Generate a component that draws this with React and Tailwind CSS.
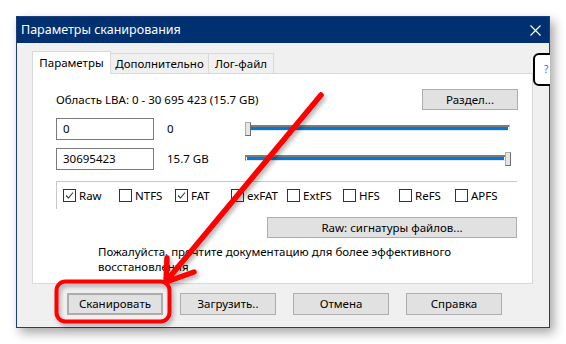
import React from 'react';

const font = { fontFamily: '"Noto Sans", "Open Sans", sans-serif' };

const Check = ({ checked, label }) => (
  <div className="flex items-center w-[56px]">
    <div className="w-[13px] h-[13px] border border-[#333] bg-white flex items-center justify-center shrink-0">
      {checked && (
        <svg width="9" height="9" viewBox="0 0 9 9">
          <path d="M1 4.5 L3.5 7 L8 1.5" fill="none" stroke="#333" strokeWidth="1.1" />
        </svg>
      )}
    </div>
    <span className="ml-[3px] leading-none">{label}</span>
  </div>
);

const Btn = ({ children, className = '' }) => (
  <div className={'h-[21px] bg-[#e1e1e1] border border-[#adadad] flex items-center justify-center ' + className}>
    {children}
  </div>
);

const Slider = ({ right }) => (
  <div className="relative w-[266px] h-[14px]">
    <div
      className={
        'absolute top-[3px] h-[6px] border-t-2 border-t-[#7c7c7c] border-b border-b-[#e6e6e6] border-x border-x-[#e6e6e6] bg-white ' +
        (right ? 'left-0 right-[5px] border-l-[#7c7c7c]' : 'left-[4px] right-[1px]')
      }
    >
      <div className="h-[3px] bg-[#0078d7] mx-[1px]" />
    </div>
    <div
      className={
        'absolute top-0 w-[6px] h-[14px] bg-[#e6e6e6] border border-[#adadad] border-r-[#6d6d6d] border-b-[#6d6d6d] ' +
        (right ? 'right-0' : 'left-0')
      }
    />
  </div>
);

export default function App() {
  return (
    <div className="w-[566px] h-[344px] bg-white relative overflow-hidden text-[11.5px] text-black" style={font}>
      <div className="absolute left-[16px] top-[16px] w-[534px] h-[312px] border border-[#1a3f7a] bg-[#f0f0f0] shadow-[4px_5px_10px_rgba(0,0,0,0.35)] flex flex-col">
        {/* title bar */}
        <div className="h-[26px] bg-[#00306f] text-white flex items-center justify-between pl-[4px] pr-[8px] shrink-0">
          <span className="text-[12.5px]">Параметры сканирования</span>
          <svg width="11" height="11" viewBox="0 0 11 11">
            <path d="M0.5 0.5 L10.5 10.5 M10.5 0.5 L0.5 10.5" stroke="white" strokeWidth="1.2" />
          </svg>
        </div>

        <div className="pl-[15px] pt-[7px]">
          {/* tabs */}
          <div className="flex items-end h-[23px]">
            <div className="h-[23px] w-[79px] bg-white border border-[#d9d9d9] border-b-0 flex items-center justify-center relative z-10 -mb-px">Параметры</div>
            <div className="h-[20px] w-[98px] border border-[#d9d9d9] border-l-0 border-b-0 flex items-center justify-center">Дополнительно</div>
            <div className="h-[20px] w-[65px] border border-[#d9d9d9] border-l-0 border-b-0 flex items-center justify-center">Лог-файл</div>
          </div>

          {/* panel */}
          <div className="w-[501px] h-[211px] bg-white border border-[#d9d9d9] pl-[23px] pt-[15px]">
            <div className="flex items-center justify-between w-[462px]">
              <span>Область LBA: 0 - 30 695 423 (15.7 GB)</span>
              <Btn className="w-[96px]">Раздел...</Btn>
            </div>

            <div className="flex items-center mt-[8px] h-[22px]">
              <div className="w-[98px] h-[22px] border border-[#7a7a7a] flex items-center pl-[6px]">0</div>
              <span className="w-[91px] pl-[13px]">0</span>
              <Slider />
            </div>

            <div className="flex items-center mt-[8px] h-[22px]">
              <div className="w-[98px] h-[22px] border border-[#7a7a7a] flex items-center pl-[6px]">30695423</div>
              <span className="w-[91px] pl-[13px]">15.7 GB</span>
              <Slider right />
            </div>

            {/* group */}
            <div className="mt-[11px] w-[461px] h-[28px] border-t border-l border-[#c8c8c8] flex items-center pl-[6px]">
              <Check checked label="Raw" />
              <Check label="NTFS" />
              <Check checked label="FAT" />
              <Check label="exFAT" />
              <Check label="ExtFS" />
              <Check label="HFS" />
              <Check label="ReFS" />
              <Check label="APFS" />
            </div>

            <div className="flex mt-[8px] pl-[211px]">
              <Btn className="w-[250px]">Raw: сигнатуры файлов...</Btn>
            </div>

            <div className="pl-[42px] mt-[6px] leading-[15px]">
              Пожалуйста, прочтите документацию для более эффективного
              <br />
              восстановления
            </div>
          </div>

          {/* bottom buttons */}
          <div className="flex gap-[17px] pl-[35px] mt-[9px]">
            <Btn className="w-[96px] h-[22px] border-2 border-[#0078d7]">Сканировать</Btn>
            <Btn className="w-[96px] h-[22px]">Загрузить..</Btn>
            <Btn className="w-[96px] h-[22px]">Отмена</Btn>
            <Btn className="w-[96px] h-[22px]">Справка</Btn>
          </div>
        </div>

        {/* help bubble */}
        <div className="absolute right-[-1px] top-[36px] w-[17px] h-[33px] overflow-hidden">
          <div className="w-[30px] h-[33px] bg-white border-2 border-black rounded-[6px] flex items-center pl-[9px] text-[10px] text-[#2a6ad8]">?</div>
        </div>
      </div>

      {/* annotation overlay */}
      <svg className="absolute inset-0 pointer-events-none" width="566" height="344">
        <defs>
          <filter id="sh" x="-20%" y="-20%" width="140%" height="140%">
            <feDropShadow dx="2" dy="3" stdDeviation="2" floodColor="#000" floodOpacity="0.3" />
          </filter>
        </defs>
        <g filter="url(#sh)" stroke="#ff0000" fill="none" strokeLinecap="round" strokeLinejoin="round">
          <path d="M321 95 L168 279" strokeWidth="5.5" />
          <path d="M167 258 L166 282 L194 272" strokeWidth="5.5" />
          <rect x="56.5" y="281.5" width="113" height="40" rx="9" strokeWidth="4" />
        </g>
      </svg>
    </div>
  );
}
